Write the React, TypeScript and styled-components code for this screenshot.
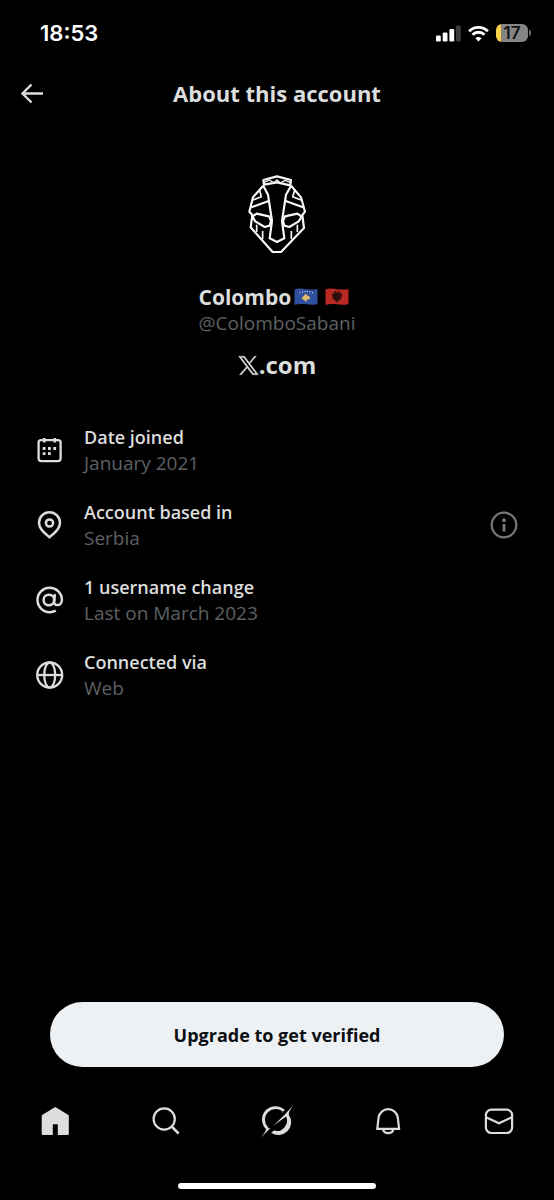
import React from "react";
import styled, { createGlobalStyle } from "styled-components";

const GlobalStyle = createGlobalStyle`
  *, *::before, *::after { box-sizing: border-box; }
  html, body { margin: 0; padding: 0; background: #000; }
  body { font-family: "Open Sans", "Noto Sans", sans-serif; color: #dcdddd; }
  button { font: inherit; color: inherit; background: none; border: 0; padding: 0; cursor: pointer; }
  h1, h2, p, dl, dt, dd { margin: 0; }
  svg { display: block; flex: none; }
`;

const Screen = styled.div`
  min-height: 100vh;
  display: flex;
  flex-direction: column;
  background: #000;
`;

const StatusBar = styled.div`
  display: flex;
  align-items: center;
  justify-content: space-between;
  height: 66px;
  padding: 0 23px 0 40px;
`;

const Clock = styled.time`
  font: 600 22px/26px Inter, sans-serif;
  color: #fff;
`;

const StatusIcons = styled.div`
  display: flex;
  align-items: center;
  gap: 7px;
`;

const Battery = styled.div`
  display: flex;
  align-items: center;
  gap: 1px;
`;

const BatteryBody = styled.div`
  width: 32px;
  height: 18px;
  border-radius: 6px;
  background: linear-gradient(to right, #f7d34b 5px, #858585 5px);
  font: 600 17px/18px Inter, sans-serif;
  color: #111;
  text-align: center;
`;

const BatteryTip = styled.div`
  width: 2px;
  height: 6px;
  border-radius: 0 2px 2px 0;
  background: #6b6b6b;
`;

const Header = styled.header`
  display: grid;
  grid-template-columns: 48px 1fr 48px;
  align-items: center;
  height: 54px;
  padding: 0 8px;
`;

const IconButton = styled.button`
  display: flex;
  align-items: center;
  justify-content: center;
  height: 48px;
`;

const Title = styled.h1`
  font-size: 22px;
  line-height: 28px;
  font-weight: 700;
  text-align: center;
`;

const Main = styled.main`
  flex: 1;
  display: flex;
  flex-direction: column;
  padding-top: 40px;
`;

const Profile = styled.section`
  display: flex;
  flex-direction: column;
  align-items: center;
`;

const Identity = styled.div`
  padding-top: 14px;
`;

const NameLine = styled.div`
  display: flex;
  align-items: center;
  gap: 3px;
`;

const Flags = styled.span`
  display: flex;
  gap: 7px;
`;

const Name = styled.h2`
  font-size: 21px;
  line-height: 26px;
  font-weight: 700;
`;

const Handle = styled.p`
  font-size: 19px;
  line-height: 26px;
  color: #5d6064;
`;

const Site = styled.p`
  display: flex;
  align-items: center;
  padding-top: 14px;
  font-size: 24px;
  line-height: 30px;
  font-weight: 700;
`;

const Facts = styled.dl`
  display: flex;
  flex-direction: column;
  gap: 23px;
  padding: 44px 36px 0;
`;

const Fact = styled.div`
  display: flex;
  align-items: center;
  gap: 20px;
`;

const FactText = styled.div`
  flex: 1;
`;

const Label = styled.dt`
  font-size: 18px;
  line-height: 26px;
  font-weight: 600;
`;

const Value = styled.dd`
  font-size: 19px;
  line-height: 26px;
  color: #5d6064;
`;

const Footer = styled.footer`
  display: flex;
  flex-direction: column;
`;

const Upgrade = styled.button`
  height: 65px;
  margin: 0 50px;
  border-radius: 33px;
  background: #eef1f3;
  color: #0c0f12;
  font-size: 18px;
  line-height: 26px;
  font-weight: 700;
`;

const TabBar = styled.nav`
  display: flex;
  height: 108px;
`;

const Tab = styled.a`
  flex: 1;
  display: flex;
  align-items: center;
  justify-content: center;
  color: #dcdddd;
`;

const HomeIndicator = styled.div`
  align-self: center;
  width: 198px;
  height: 6px;
  margin: 8px 0 11px;
  border-radius: 3px;
  background: #fff;
`;

const line = (width: number) => ({
  fill: "none",
  stroke: "currentColor",
  strokeWidth: width,
});

const Mask = () => (
  <svg width="100" height="110" viewBox="0 0 300 330" fill="none" stroke="#f8f8f8" strokeWidth="6.5" strokeLinejoin="round" role="img" aria-label="Colombo avatar">
    <path d="M109 60 150 49 192 60 190 76 150 67 111 74Z" />
    <path d="M111 67 128 60 141 69 150 60 160 69 174 61 191 68" strokeWidth="4" />
    <path d="M108 76 123 104 135 183 128 235 150 246 172 235 165 183 177 104 193 76" />
    <path d="M108 78 78 112 67 155 76 165 71 202 137 276H162L231 204 226 165 234 155 222 112 193 78" />
    <path d="M98 91 103 110 78 120M203 91 197 110 222 120" strokeWidth="5" />
    <path d="M73 142 125 123M228 142 176 123" />
    <path d="M76 170 89 161 126 169 132 183 128 197 113 201 85 184ZM224 170 211 161 174 169 168 183 172 197 187 201 215 184Z" />
    <path d="M89 194V216M107 213V237M211 194V216M193 213V237" strokeWidth="5" />
  </svg>
);

const KosovoFlag = () => (
  <svg width="24" height="18" viewBox="0 0 24 18" role="img" aria-label="Kosovo">
    <path d="M.5 1.500C5-.3 8 .6 12 1.200s8 .6 11.500-.3v15c-4 1.200-7.500 1-11.500.4S4 15.600 .5 17Z" fill="#304f9d" />
    <path d="M11.500 5.500 13 7.200l1.800 1 1.700 1.600-1.500 1.500-2.200.5-.8 2.200-1.600-1.800-2.600-1.400.4-1.700 1.800-1Z" fill="#e0bd69" />
    <path d="M5.500 4.800h1M8 3.800h1M10.500 3.500h1M13 3.500h1M15.500 4h1M18 4.800h1" stroke="#e8ecf5" strokeWidth="1" />
  </svg>
);

const AlbaniaFlag = () => (
  <svg width="24" height="18" viewBox="0 0 24 18" role="img" aria-label="Albania">
    <path d="M.5 1.500C5-.3 8 .6 12 1.200s8 .6 11.500-.3v15c-4 1.200-7.500 1-11.500.4S4 15.600 .5 17Z" fill="#b92822" />
    <path d="M12 5.200 10.800 3 8.800 3.500l1.200 1.500L9 5.800 7 4.200l.2 2 1.200 1-1.600-.3.500 1.300 1.300.6-1.500.2.700 1.200 1.300.1-1.100.9.900.8 1.200-.5-.3 1.600 1.100-.4 1.100 2.200 1.100-2.200 1.100.4-.3-1.600 1.200.5.900-.8-1.100-.9 1.300-.1.700-1.200-1.500-.2 1.300-.6.500-1.300-1.600.3 1.200-1 .2-2-2 1.600-1-.8 1.200-1.500-2-.5Z" fill="#2c0e0e" />
  </svg>
);

const XMark = () => (
  <svg width="21" height="21" viewBox="1 2 22 20" fill="currentColor" stroke="currentColor" strokeWidth="0.400" role="img" aria-label="X">
    <path d="M18.300 2.250h1.900l-6.650 7.750 8.850 11.750H16.200l-5.500-7.300-6.200 7.300H2.500l7.350-8.550L1.600 2.250H7.800l5 6.650zm-1.250 18.100h2.550L6.950 3.650H4.400z" />
  </svg>
);

const BackIcon = () => (
  <svg width="24" height="24" viewBox="0 0 24 24" {...line(2.4)}>
    <path d="M23 12.500H2.500M11.500 3.500 2.500 12.500l9 9" />
  </svg>
);

const CalendarIcon = () => (
  <svg width="28" height="28" viewBox="0 0 28 28" {...line(2.3)}>
    <rect x="2.600" y="4.100" width="22" height="21" rx="2.500" />
    <path d="M8.300 2v4.500M18.900 2v4.500" strokeWidth="2.600" />
    <path d="M12 12.500h2.800M17.300 12.500h2.800M6.700 12.500h2.800M6.700 17.600h2.800M12 17.600h2.800" strokeWidth="2.800" />
  </svg>
);

const PinIcon = () => (
  <svg width="28" height="28" viewBox="0 0 28 28" {...line(2.5)}>
    <path d="M13.500 26.200C8 21.300 3 17.500 3 11.800a10.500 10.500 0 0 1 21 0c0 5.700-5 9.500-10.500 14.400Z" />
    <circle cx="13.500" cy="12" r="3.600" />
  </svg>
);

const AtIcon = () => (
  <svg width="28" height="28" viewBox="0 0 28 28" {...line(2.500)}>
    <circle cx="12.900" cy="14" r="5.300" />
    <path d="M18.900 8.200 18.200 15.300c-.3 2.500 1 3.800 3 3.800 2.800 0 4.700-2.200 4.700-5.400A12.200 12.200 0 1 0 13.700 26.200c2.300 0 4.200-.5 6.100-1.600" />
  </svg>
);

const GlobeIcon = () => (
  <svg width="28" height="28" viewBox="0 0 28 28" {...line(2.3)}>
    <circle cx="13.700" cy="14" r="12.500" />
    <ellipse cx="13.700" cy="14" rx="5.500" ry="12.500" />
    <path d="M1.200 14h25" />
  </svg>
);

const InfoIcon = () => (
  <svg width="28" height="28" viewBox="0 0 28 28" {...line(2.200)}>
    <circle cx="14" cy="14" r="12.300" />
    <path d="M14 13v7.500" strokeWidth="2.800" />
    <circle cx="14" cy="9.200" r="1.900" fill="currentColor" stroke="none" />
  </svg>
);

const HomeIcon = () => (
  <svg width="32" height="32" viewBox="0 0 32 32" fill="currentColor">
    <path d="M16.300 1.900 29.800 10.300V29.100a1 1 0 0 1-1 1H18.800V19.200H13.800V30.100H3.700a1 1 0 0 1-1-1V10.300Z" />
  </svg>
);

const SearchIcon = () => (
  <svg width="32" height="32" viewBox="0 0 32 32" {...line(2.200)}>
    <circle cx="14.200" cy="14" r="10.600" />
    <path d="M21.500 21.300 28.600 28.500" strokeWidth="2.600" />
  </svg>
);

const GrokIcon = () => (
  <svg width="34" height="34" viewBox="0 0 34 34" fill="currentColor">
    <path d="M23.300 8.200A10.500 10.500 0 0 0 8 23.200C8.300 24 9 24.600 10.400 24.300L1 33.500C4 29.500 6.300 27 5.900 25A12.700 12.700 0 0 1 24.900 6.100L21.800 8.600Z" />
    <path d="M13.300 21.700 24.600 10.800 33.300 1.200C30 6 28.200 8.500 29 11.200A12.700 12.700 0 0 1 11.200 28.700L14 26.600A10.300 10.300 0 0 0 26.100 12.600Z" />
  </svg>
);

const BellIcon = () => (
  <svg width="32" height="32" viewBox="0 0 32 32" {...line(2.200)}>
    <path d="M5.300 23.900 6.600 12.500a9.700 9.700 0 0 1 19.200 0L27.100 23.900Z" />
    <path d="M11 24.300a5.300 4.800 0 0 0 10.400 0" />
  </svg>
);

const MailIcon = () => (
  <svg width="32" height="32" viewBox="0 0 32 32" {...line(2.200)}>
    <rect x="2.900" y="4.600" width="26.200" height="23.400" rx="5.500" />
    <path d="M3 12.200 16 18.300 29 12.200" />
  </svg>
);

const SignalIcon = () => (
  <svg width="25" height="17" viewBox="0 0 25 17" fill="#fff">
    <rect x="0" y="10.500" width="4.800" height="6" rx="1.300" />
    <rect x="6.700" y="7.500" width="4.800" height="9" rx="1.300" />
    <rect x="13.400" y="4" width="4.800" height="12.500" rx="1.300" />
    <rect x="20" y="0.500" width="4.800" height="16" rx="1.300" fill="#3c3c3c" />
  </svg>
);

const WifiIcon = () => (
  <svg width="21" height="17" viewBox="0 0 21 17" fill="none" stroke="#fff" strokeWidth="2.900">
    <path d="M1.100 6.200a13.400 13.400 0 0 1 18.800 0M4.500 9.700a8.500 8.500 0 0 1 12 0" />
    <path d="M10.500 16.500 7.400 13.300a4.400 4.400 0 0 1 6.200 0Z" fill="#fff" stroke="none" />
  </svg>
);

const facts = [
  { label: "Date joined", value: "January 2021", Icon: CalendarIcon },
  { label: "Account based in", value: "Serbia", Icon: PinIcon, info: true },
  { label: "1 username change", value: "Last on March 2023", Icon: AtIcon },
  { label: "Connected via", value: "Web", Icon: GlobeIcon },
];

const tabs = [
  { name: "Home", Icon: HomeIcon },
  { name: "Search", Icon: SearchIcon },
  { name: "Grok", Icon: GrokIcon },
  { name: "Notifications", Icon: BellIcon },
  { name: "Messages", Icon: MailIcon },
];

const InfoButton = styled(IconButton)`
  height: 28px;
  color: #77797c;
`;

export default function App() {
  return (
    <Screen>
      <GlobalStyle />
      <StatusBar>
        <Clock>18:53</Clock>
        <StatusIcons>
          <SignalIcon />
          <WifiIcon />
          <Battery>
            <BatteryBody>17</BatteryBody>
            <BatteryTip />
          </Battery>
        </StatusIcons>
      </StatusBar>
      <Header>
        <IconButton type="button" aria-label="Back">
          <BackIcon />
        </IconButton>
        <Title>About this account</Title>
      </Header>
      <Main>
        <Profile>
          <Mask />
          <Identity>
            <NameLine>
              <Name>Colombo</Name>
              <Flags>
                <KosovoFlag />
                <AlbaniaFlag />
              </Flags>
            </NameLine>
            <Handle>@ColomboSabani</Handle>
          </Identity>
          <Site>
            <XMark />
            .com
          </Site>
        </Profile>
        <Facts>
          {facts.map(({ label, value, Icon, info }) => (
            <Fact key={label}>
              <Icon />
              <FactText>
                <Label>{label}</Label>
                <Value>{value}</Value>
              </FactText>
              {info && (
                <InfoButton type="button" aria-label="More about account location">
                  <InfoIcon />
                </InfoButton>
              )}
            </Fact>
          ))}
        </Facts>
      </Main>
      <Footer>
        <Upgrade type="button">Upgrade to get verified</Upgrade>
        <TabBar aria-label="Primary">
          {tabs.map(({ name, Icon }) => (
            <Tab key={name} href={`#${name.toLowerCase()}`} aria-label={name}>
              <Icon />
            </Tab>
          ))}
        </TabBar>
        <HomeIndicator />
      </Footer>
    </Screen>
  );
}
